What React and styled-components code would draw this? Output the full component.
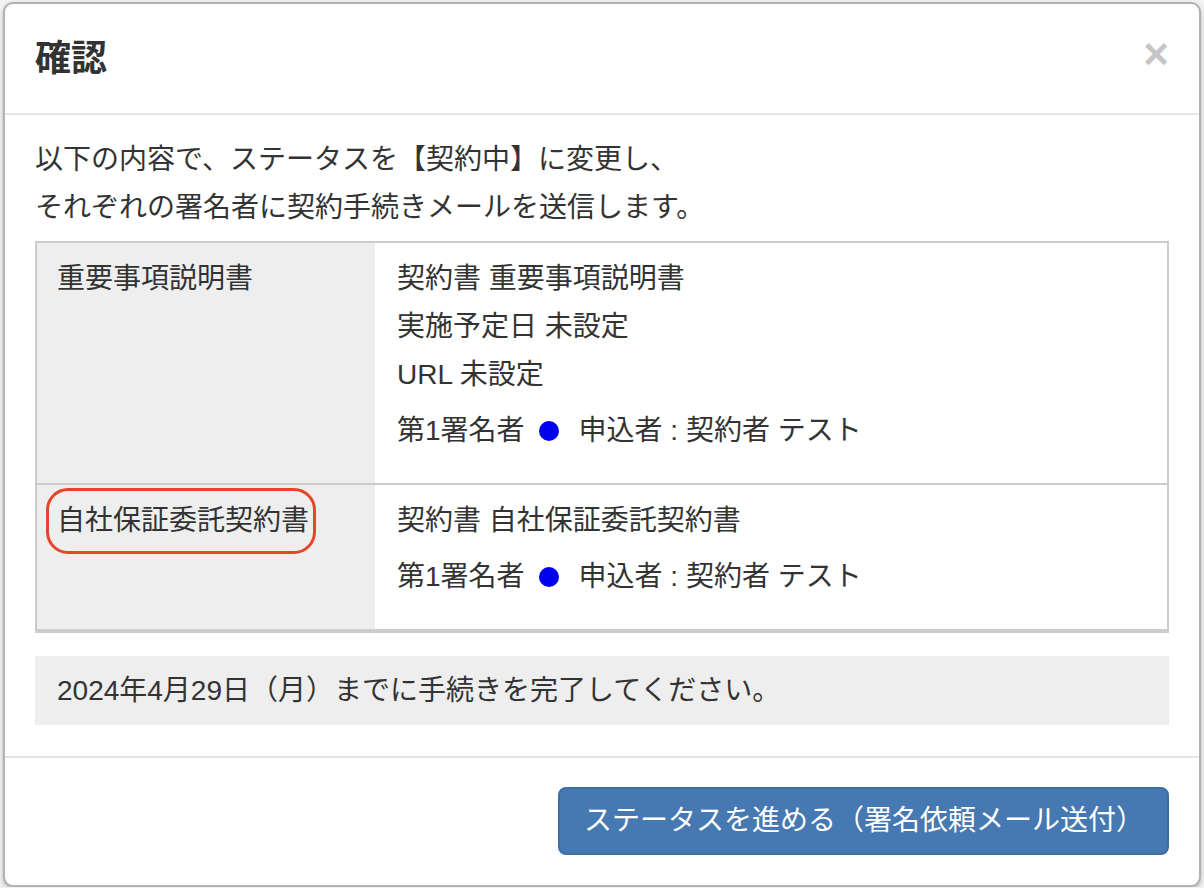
import React from "react";
import styled, { createGlobalStyle } from "styled-components";

const GlobalStyle = createGlobalStyle`
  html, body {
    margin: 0;
    padding: 0;
    background: #f2f2f2;
  }
  body {
    font-family: "Liberation Sans", "Noto Sans CJK JP", sans-serif;
    color: #333;
  }
`;

const Page = styled.div`
  padding: 2px 3px 0 3px;
`;

const ModalContent = styled.div`
  background: #fff;
  border: 2px solid rgba(0, 0, 0, 0.3);
  border-radius: 10px;
  box-shadow: 0 2px 4px rgba(0, 0, 0, 0.25);
  display: flex;
  flex-direction: column;
`;

const Header = styled.div`
  display: flex;
  align-items: center;
  justify-content: space-between;
  padding: 29px 30px 29px 30px;
  border-bottom: 2px solid #e5e5e5;
`;

const Title = styled.h4`
  margin: 0;
  font-size: 36px;
  line-height: 51px;
  font-weight: bold;
  color: #333;
`;

const Close = styled.button`
  border: 0;
  background: transparent;
  padding: 0;
  margin-top: -10px;
  font-family: "Liberation Sans", sans-serif;
  font-size: 44px;
  line-height: 1;
  font-weight: bold;
  color: #c6c6c6;
  cursor: pointer;
`;

const Body = styled.div`
  padding: 21px 30px 31px 30px;
  border-bottom: 2px solid #e5e5e5;
  font-size: 28px;
  line-height: 48px;
`;

const Lead = styled.p`
  margin: 0 0 9px 0;
`;

const Table = styled.div`
  border: 2px solid #ccc;
  box-shadow: 0 2px 0 #ccc;
`;

const Row = styled.div`
  display: grid;
  grid-template-columns: 338px 1fr;
  border-top: ${({ $first }) => ($first ? "0" : "2px solid #ccc")};
`;

const Cell = styled.div`
  padding: ${({ $label }) => ($label ? "12px 20px 28px 20px" : "12px 20px 28px 22px")};
  background: ${({ $label }) => ($label ? "#eee" : "#fff")};
`;

const LabelText = styled.span`
  display: inline-block;
  position: relative;

  ${({ $marked }) =>
    $marked &&
    `
    &::after {
      content: "";
      position: absolute;
      top: -9px;
      bottom: -9px;
      left: -11px;
      right: -7px;
      border: 3px solid #e5462a;
      border-radius: 22px;
    }
  `}
`;

const Line = styled.div``;

const SignerLine = styled.div`
  margin-top: 8px;
  display: flex;
  align-items: center;
`;

const Dot = styled.span`
  display: inline-block;
  width: 20px;
  height: 20px;
  border-radius: 50%;
  background: #0000f0;
  margin: 0 20px 0 14px;
`;

const Notice = styled.div`
  margin-top: 25px;
  background: #eee;
  padding: 11px 22px 10px 22px;
`;

const Footer = styled.div`
  display: flex;
  justify-content: flex-end;
  padding: 29px 30px 30px 30px;
`;

const PrimaryButton = styled.button`
  font-family: "Liberation Sans", "Noto Sans CJK JP", sans-serif;
  font-size: 28px;
  line-height: 42px;
  padding: 11px 23px 11px 24px;
  color: #fff;
  background: #4678b2;
  border: 2px solid #3d6ea6;
  border-radius: 8px;
  cursor: pointer;
`;

const documents = [
  {
    label: "重要事項説明書",
    lines: ["契約書 重要事項説明書", "実施予定日 未設定", "URL 未設定"],
  },
  {
    label: "自社保証委託契約書",
    marked: true,
    lines: ["契約書 自社保証委託契約書"],
  },
];

export default function App() {
  return (
    <>
      <GlobalStyle />
      <Page>
        <ModalContent>
          <Header>
            <Title>確認</Title>
            <Close aria-label="閉じる">×</Close>
          </Header>
          <Body>
            <Lead>
              以下の内容で、ステータスを【契約中】に変更し、
              <br />
              それぞれの署名者に契約手続きメールを送信します。
            </Lead>
            <Table>
              {documents.map((doc, i) => (
                <Row key={doc.label} $first={i === 0}>
                  <Cell $label>
                    <LabelText $marked={doc.marked}>{doc.label}</LabelText>
                  </Cell>
                  <Cell>
                    {doc.lines.map((line) => (
                      <Line key={line}>{line}</Line>
                    ))}
                    <SignerLine>
                      第1署名者
                      <Dot />
                      申込者 : 契約者 テスト
                    </SignerLine>
                  </Cell>
                </Row>
              ))}
            </Table>
            <Notice>2024年4月29日（月）までに手続きを完了してください。</Notice>
          </Body>
          <Footer>
            <PrimaryButton>ステータスを進める（署名依頼メール送付）</PrimaryButton>
          </Footer>
        </ModalContent>
      </Page>
    </>
  );
}
